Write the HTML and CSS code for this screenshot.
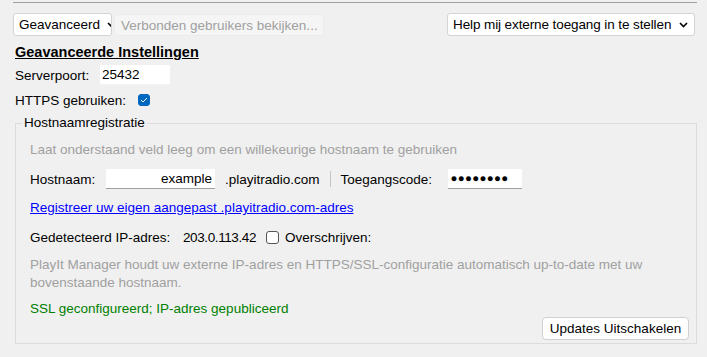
FILE: index.html
```html
<!DOCTYPE html>
<html lang="en">
<head>
    <meta charset="UTF-8">
    <title>Geavanceerd</title>
    <link rel="stylesheet" href="styles.css">
</head>
<body>
    <div class="frame">
        <!-- Top bar -->
        <div class="toolbar">
            <div class="select select-mode">
                <span>Geavanceerd</span>
                <svg class="chevron" width="9" height="6" viewBox="0 0 9 6"><path d="M1 1 L4.5 4.5 L8 1" fill="none" stroke="#000" stroke-width="1.6"/></svg>
            </div>
            <button class="btn-disabled" disabled>Verbonden gebruikers bekijken...</button>
            <div class="select select-help">
                <span>Help mij externe toegang in te stellen</span>
                <svg class="chevron" width="9" height="6" viewBox="0 0 9 6"><path d="M1 1 L4.5 4.5 L8 1" fill="none" stroke="#000" stroke-width="1.6"/></svg>
            </div>
        </div>

        <div class="content">
            <h2 class="section-title">Geavanceerde Instellingen</h2>

            <div class="row row-port">
                <label class="lbl-port">Serverpoort:</label>
                <div class="input input-port">25432</div>
            </div>

            <div class="row row-https">
                <label class="lbl-https">HTTPS gebruiken:</label>
                <span class="check checked">
                    <svg width="8" height="6" viewBox="0 0 8 6"><path d="M1 3 L3 5 L7 1" fill="none" stroke="#fff" stroke-width="1"/></svg>
                </span>
            </div>

            <!-- Hostname group -->
            <fieldset class="group">
                <legend>Hostnaamregistratie</legend>

                <p class="hint hint-top">Laat onderstaand veld leeg om een willekeurige hostnaam te gebruiken</p>

                <div class="row row-host">
                    <label class="lbl-host">Hostnaam:</label>
                    <div class="input input-host">example</div>
                    <span class="domain">.playitradio.com</span>
                    <span class="divider"></span>
                    <label class="lbl-code">Toegangscode:</label>
                    <div class="input input-code">&#9679;&#9679;&#9679;&#9679;&#9679;&#9679;&#9679;&#9679;</div>
                </div>

                <a class="link" href="#">Registreer uw eigen aangepast .playitradio.com-adres</a>

                <div class="row row-ip">
                    <label class="lbl-ip">Gedetecteerd IP-adres:</label>
                    <span class="ip">203.0.113.42</span>
                    <span class="check"></span>
                    <label class="lbl-override">Overschrijven:</label>
                </div>

                <p class="hint hint-info">PlayIt Manager houdt uw externe IP-adres en HTTPS/SSL-configuratie automatisch up-to-date met uw<br>bovenstaande hostnaam.</p>

                <p class="status">SSL geconfigureerd; IP-adres gepubliceerd</p>

                <div class="actions">
                    <button class="btn">Updates Uitschakelen</button>
                </div>
            </fieldset>
        </div>
    </div>
</body>
</html>
```

FILE: styles.css
```css
/* Base */
body {
    margin: 0;
    background-color: #f0f0f0;
    font-family: "Liberation Sans", Arial, sans-serif;
    font-size: 13.5px;
    color: #000;
}
.frame {
    margin: 2px 10px 0 13px;
    border-top: 1px solid #a0a0a0;
}

/* Toolbar */
.toolbar {
    display: flex;
    align-items: flex-start;
    padding: 10px 2px 0 0;
}
.select {
    display: flex;
    align-items: center;
    height: 23px;
    box-sizing: border-box;
    background-color: #fff;
    border: 1px solid #d4d4d4;
    border-radius: 3px;
    overflow: hidden;
    white-space: nowrap;
}
.select-mode {
    width: 99px;
    padding-left: 5px;
}
.select-mode .chevron {
    margin-left: 7px;
    flex-shrink: 0;
}
.select-help {
    width: 248px;
    margin-left: auto;
    padding-left: 5px;
    letter-spacing: -0.1px;
}
.select-help .chevron {
    margin-left: auto;
    margin-right: 6px;
}
.btn-disabled {
    width: 210px;
    height: 22px;
    margin: 1px 0 0 2px;
    padding: 0 0 0 6px;
    text-align: left;
    font: inherit;
    color: #a0a0a0;
    background-color: #f5f5f5;
    border: 1px solid #ececec;
    border-radius: 3px;
}

/* Content */
.content {
    margin-left: 2px;
}
.section-title {
    margin: 8px 0 0 0;
    font-size: 14.5px;
    line-height: 16px;
    font-weight: bold;
    text-decoration: underline;
}
.row {
    display: flex;
    align-items: center;
    height: 20px;
}
.row label,
.row span {
    flex-shrink: 0;
    white-space: nowrap;
}
.row-port {
    margin-top: 5px;
}
.lbl-port {
    width: 85px;
}
.row-https {
    margin-top: 5px;
}
.lbl-https {
    width: 123px;
}
.input {
    height: 20px;
    box-sizing: border-box;
    line-height: 19px;
    background-color: #fff;
    border-bottom: 1px solid #a0a0a0;
    padding: 0 3px;
    white-space: nowrap;
}
.input-port {
    width: 70px;
    padding-left: 2px;
    border-bottom-color: #f4f4f4;
}
.check {
    display: inline-flex;
    align-items: center;
    justify-content: center;
    width: 12px;
    height: 12px;
    box-sizing: border-box;
    border: 1px solid #555;
    border-radius: 3px;
    background-color: #fff;
}
.check.checked {
    background-color: #0067c0;
    border-color: #0067c0;
}

/* Hostname group */
.group {
    margin: 5px 0 0 0;
    padding: 0 7px 3px 14px;
    border: 1px solid #dcdcdc;
}
.group legend {
    margin-left: -8px;
    padding: 0 2px;
    line-height: 16px;
}
.hint {
    margin: 0;
    color: #a0a0a0;
    line-height: 16px;
}
.hint-top {
    margin-top: 11px;
}
.row-host {
    margin-top: 11px;
}
.lbl-host {
    width: 76px;
}
.input-host {
    width: 109px;
    text-align: right;
}
.domain {
    margin-left: 10px;
}
.divider {
    width: 1px;
    height: 16px;
    margin-left: 10px;
    background-color: #c4c4c4;
}
.lbl-code {
    width: 96px;
    margin-left: 10px;
}
.input-code {
    width: 74px;
    margin-left: 11px;
    font-size: 11.5px;
    letter-spacing: 0.3px;
}
.link {
    display: block;
    margin-top: 11px;
    line-height: 16px;
    color: #0000ff;
    width: max-content;
}
.row-ip {
    margin-top: 11px;
}
.lbl-ip {
    width: 153px;
}
.ip {
    width: 83px;
    letter-spacing: -0.4px;
}
.row-ip .check {
    width: 13px;
    height: 13px;
}
.lbl-override {
    margin-left: 6px;
}
.hint-info {
    margin-top: 9px;
    line-height: 18px;
}
.status {
    margin: 9px 0 0 0;
    line-height: 16px;
    color: #008000;
}
.actions {
    display: flex;
    justify-content: flex-end;
}
.btn {
    width: 147px;
    height: 23px;
    padding: 0;
    font: inherit;
    background-color: #fff;
    border: 1px solid #d0d0d0;
    border-radius: 4px;
}
```
